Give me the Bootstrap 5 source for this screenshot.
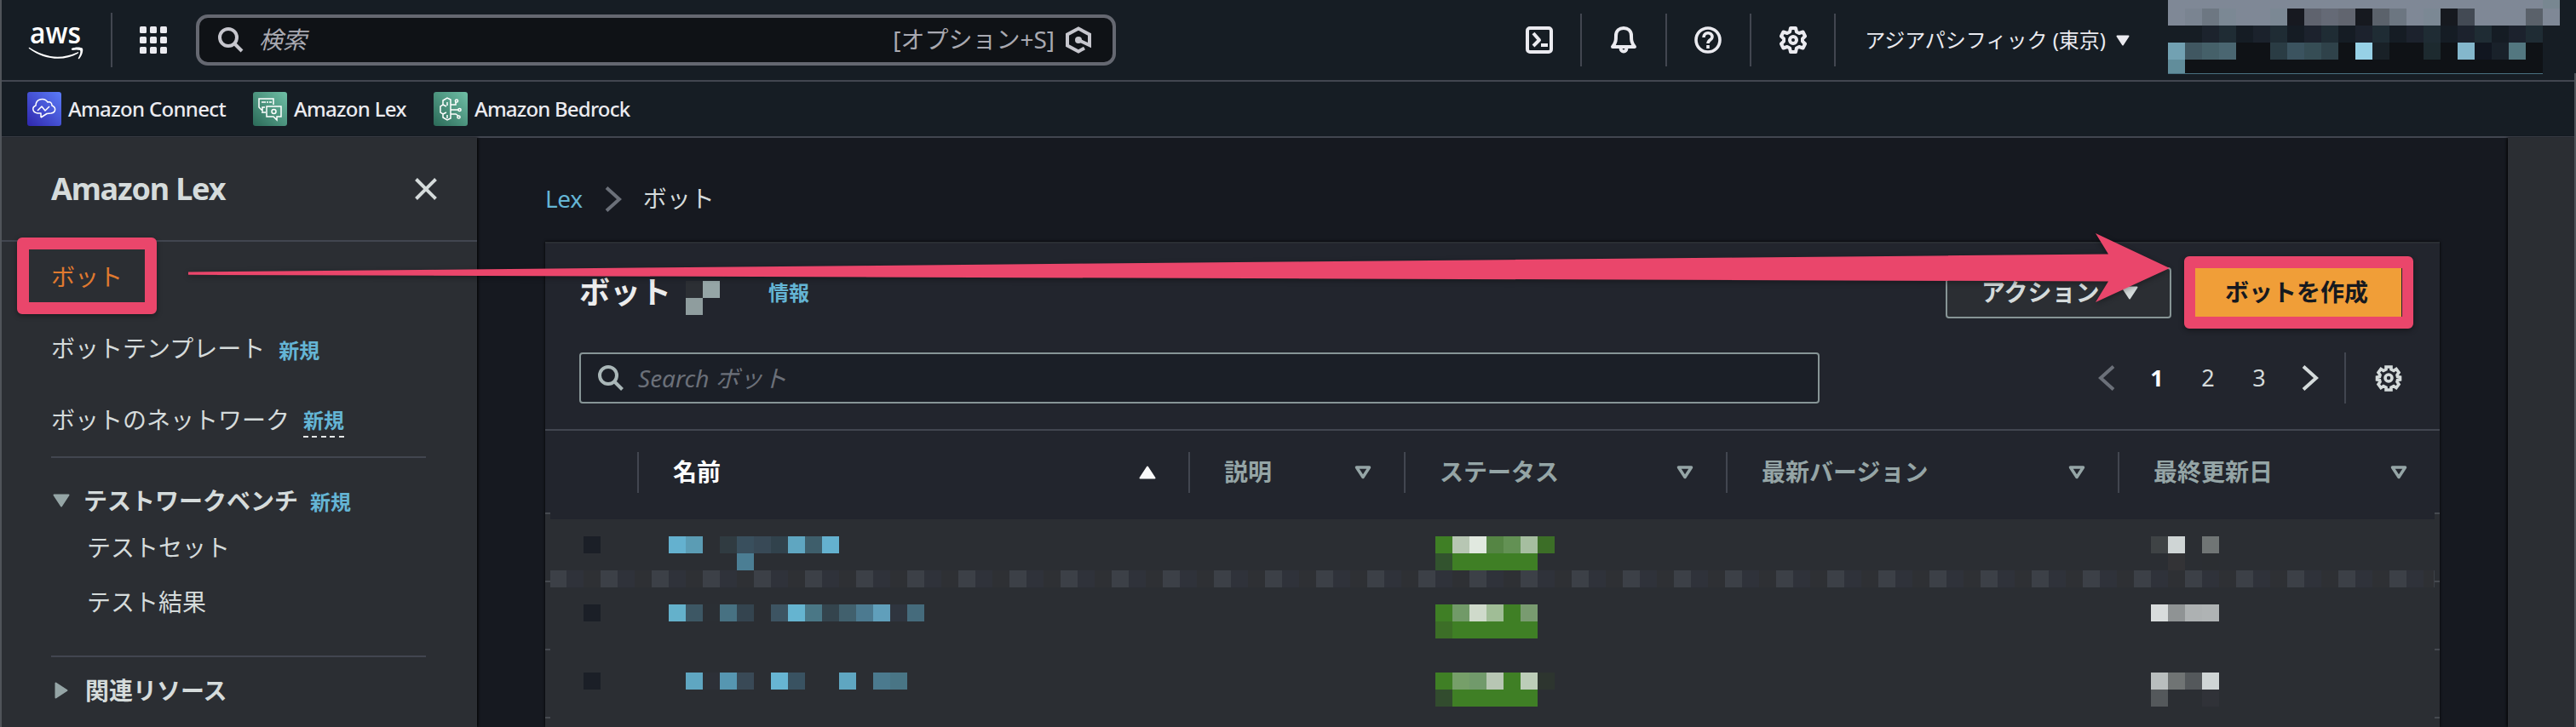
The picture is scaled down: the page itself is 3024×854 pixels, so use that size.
<!DOCTYPE html>
<html lang="ja" data-bs-theme="dark">
<head>
<meta charset="utf-8">
<title>Amazon Lex</title>
<meta name="viewport" content="width=device-width, initial-scale=1">
<link href="https://cdn.jsdelivr.net/npm/bootstrap@5.3.0/dist/css/bootstrap.min.css" rel="stylesheet">
<style>
  :root { --line:#424650; --panel:#2b2e33; --head:#22252d; --txt:#d5dbdb; --link:#64b5d5; --pink:#ea466b; --muted:#95a5a6; }
  body { width:3024px; height:854px; background:#161920; color:var(--txt); font-family:"Noto Sans","Noto Sans CJK JP",sans-serif; font-size:28px; line-height:40px; }
  svg { display:block; flex:none; }
  .edge { top:0; width:2px; height:854px; background:#50545a; z-index:5; }
  .edge-end { top:86px; height:768px; right:0; }
  .topnav { height:96px; background:#161d24; border-bottom:2px solid var(--line); padding-left:33px; color:#ebebf0; }
  .vline { width:2px; height:64px; background:var(--line); }
  .gsearch { width:1080px; height:60px; border:4px solid #656871; border-radius:14px; background:#0f1216; padding:0 25px 0 22px; color:#a9a9b1; }
  .tool { width:99.33px; height:62px; border-right:2px solid var(--line); }
  .region { font-size:24px; margin-left:34px; }
  .favbar { height:66px; background:#161d24; border-bottom:2px solid var(--line); padding-left:32px; gap:32px; font-size:24px; color:#ebebf0; font-weight:500; }
  .favitem { gap:8px; height:40px; }
  .side { width:560px; background:var(--panel); box-shadow:1px 0 3px #000; z-index:1; }
  .side-head { height:122px; border-bottom:2px solid var(--line); padding:0 47px 0 60px; font-size:36px; font-weight:700; }
  .side-link { height:84px; padding:0 0 3px 60px; }
  .sub-link { height:64px; padding-left:102px; }
  .fresh { font-size:24px; line-height:34px; font-weight:700; color:var(--link); position:relative; }
  .fresh-dash::after { content:""; position:absolute; left:0; right:0; bottom:-3px; height:2px; background:repeating-linear-gradient(90deg,#e6e8e8 0 6px,transparent 6px 10.4px); }
  .rule { height:2px; margin:0 60px; background:var(--line); }
  .callout { position:absolute; border:solid var(--pink); border-radius:6px; box-shadow:0 2px 6px rgba(0,0,0,.4); z-index:4; }
  .main-col { padding:0 80px; }
  .end-rail { width:80px; background:var(--panel); box-shadow:-1px 0 3px #000; }
  .crumbs { height:122px; padding-top:50px; gap:26px; }
  .panel { background:var(--head); border-top:2px solid #2a2e33; box-shadow:0 0 3px #000; height:570px; }
  .panel-title { font-size:36px; font-weight:700; color:#ececec; }
  .act { height:60px; border:2px solid #879596; border-radius:4px; background:var(--panel); width:265px; font-weight:700; padding:0 0 2px 40px; gap:27px; }
  .make { width:242px; height:57px; background:#f09e38; color:#16191f; font-weight:700; margin:1px 0 0 28px; padding:0 4px 2px 0; }
  .fsearch { width:1456px; height:60px; border:2px solid #879596; border-radius:4px; background:#1b1f27; color:#6b7079; padding-left:20px; }
  .list { table-layout:fixed; border-collapse:separate; border-spacing:0; border-top:2px solid var(--line); }
  .list > thead th { height:98px; padding:0 38px 0 0; border:0; background:var(--head); color:var(--muted); vertical-align:middle; }
  .hcell { height:48px; border-left:2px solid var(--line); padding-left:40px; }
  .hcell span { padding-bottom:3px; }
  .list > tbody td { height:80px; padding:26px 0 0; border:0; background:var(--panel); vertical-align:top; }
  .list > tbody tr:last-child td { height:10px; padding:0; }
  .px { display:grid; grid-auto-rows:20px; }
  .head-foot { left:6px; right:6px; top:318px; height:6px; background:var(--head); }
  .band { left:6px; right:6px; top:384px; height:20px; background:repeating-linear-gradient(90deg,#3c4047 0 20px,#2f323a 20px 40px,#2e3034 40px 60px) -1px 0; }
  .tick { width:6px; height:2px; background:#464a50; }
  .arrow { left:0; top:0; z-index:4; pointer-events:none; filter:drop-shadow(0 2px 3px rgba(0,0,0,.35)); }
</style>
</head>
<body class="overflow-hidden position-relative d-flex flex-column m-0">
<div class="edge position-absolute start-0"></div>
<div class="edge edge-end position-absolute"></div>

<header class="topnav d-flex align-items-center flex-shrink-0">
  <svg width="66" height="72" viewBox="0 -15 66 72" fill="#fff">
    <text x="2" y="25" font-family="Open Sans" font-weight="600" font-size="35" textLength="60" lengthAdjust="spacingAndGlyphs">aws</text>
    <path d="M1 31C19 45 43 46 58 37Q60 36 59 35Q41 43 26 40Q12 37 2 30Q0 29 1 31Z"/>
    <path d="M51 31C55 29 62 29 64 31C65 34 63 40 60 43Q58 44 59 42C61 38 62 35 61 33Q57 32 52 33Q50 32 51 31Z"/>
  </svg>
  <div class="vline" style="margin-left:31px"></div>
  <svg style="margin-left:32px" width="32" height="32" fill="#ebebf0">
    <g id="dots"><rect width="8" height="8" rx="1.5"/><rect x="12" width="8" height="8" rx="1.5"/><rect x="24" width="8" height="8" rx="1.5"/></g>
    <use href="#dots" y="12"/><use href="#dots" y="24"/>
  </svg>
  <div class="gsearch d-flex align-items-center" style="margin-left:34px">
    <svg width="30" height="30" viewBox="0 0 30 30" fill="none" stroke="#c6c6cd" stroke-width="4"><circle cx="12" cy="12" r="10"/><path d="M19 19l9 9"/></svg>
    <span class="fst-italic" style="margin:-2px 0 0 18px">検索</span>
    <span class="ms-auto" style="margin-top:-2px">[オプション+S]</span>
    <svg style="margin-left:13px" width="30" height="32" viewBox="0 0 30 32" fill="none" stroke="#c6c6cd" stroke-width="4"><path d="M22 25.500L15 29.500L2 22.500V9.500L15 2.500L28 9.500V22L15 16"/><circle cx="15" cy="16" r="4" fill="#c6c6cd" stroke="none"/></svg>
  </div>
  <div class="d-flex align-items-center" style="margin-left:448px">
    <div class="tool d-flex align-items-center justify-content-center"><svg width="32" height="32" viewBox="0 0 32 32" fill="none" stroke="#ebebf0" stroke-width="4" stroke-linejoin="round"><rect x="2" y="2" width="28" height="28" rx="3"/><path d="M9 8l7 8-7 7M18 22h8"/></svg></div>
    <div class="tool d-flex align-items-center justify-content-center"><svg width="32" height="32" viewBox="0 0 32 32" fill="none" stroke="#ebebf0" stroke-width="4" stroke-linejoin="round"><path d="M3 24C7 19 7 16 7 11C7 5 11 2 16 2S25 5 25 11C25 16 25 19 29 24Z"/><path d="M12.500 25c0 6 7 6 7 0"/></svg></div>
    <div class="tool d-flex align-items-center justify-content-center"><svg width="32" height="32" viewBox="0 0 32 32" fill="none" stroke="#ebebf0" stroke-width="3.600"><circle cx="16" cy="16" r="14"/><path d="M11 13C11 6 21 6 21 12.500C21 16 16 15.500 16 20"/><path d="M16 22v4"/></svg></div>
    <div class="tool d-flex align-items-center justify-content-center"><svg width="32" height="32" viewBox="0 0 32 32" fill="none" stroke="#ebebf0" stroke-width="4" stroke-linejoin="round"><path d="M13 2h6l1 4.500 3 1.500 4.500-1.500 2.500 5-3 3v3l3 3-2.500 5-4.500-1.500-3 1.500-1 4.500h-6l-1-4.500-3-1.500-4.500 1.500-2.500-5 3-3v-3l-3-3 2.500-5 4.500 1.500 3-1.500z"/><circle cx="16" cy="16" r="4"/></svg></div>
    <span class="region">アジアパシフィック (東京)</span>
    <svg style="margin-left:12px" width="16" height="13" fill="#ebebf0" stroke="#ebebf0" stroke-width="2" stroke-linejoin="round"><path d="M1.500 1.500h13L8 11.500z"/></svg>
  </div>
  <div class="ms-auto align-self-start" style="margin-right:19px">
    <div class="px" style="grid-auto-rows:10px" data-px="7f8896*22 788791"></div>
    <div class="px" data-px="7f8896 7a8491 6d7782 7b8894 7f8896*2 7b8894 171920 5f636e 656a76 61656f 16191f 5b626b 6c7681 7f8896 7b8894 16191f 434a54 7f8896*3 5a616a 7f8896/161d24*2 1c232d 1f2c34 151c24 1b222c 1f2c34 151c24 1c222d 1f2c34 151c24 1c222d 1f2c34 151c24 1c222d 1f2c34 151c24 1c222d 1f2c34 151c24 1c222d 1f2c34 -/72a1b2 405761 456069 4a6671 0f1216*2 2a3c44 3b535f 364d55 2f424a 0f1216 97d1e6 192127 0f1216*2 1d2a2f 0f1216 84b7cc 111620 19212a 537780 0f1216 -"></div>
    <div class="px" style="grid-auto-rows:16px" data-px="618d9b 0f1216*21 -"></div>
    <div style="width:440px;height:1px;background:#487080"></div>
  </div>
</header>

<nav class="favbar d-flex align-items-center flex-shrink-0">
  <div class="favitem d-flex align-items-center" style="width:233px">
    <svg width="40" height="40" viewBox="0 0 40 40"><defs><linearGradient id="gb" x1="0" y1="1" x2="1" y2="0"><stop stop-color="#2f27ad"/><stop offset="1" stop-color="#5b7cf8"/></linearGradient><linearGradient id="gg" x1="0" y1="1" x2="1" y2="0"><stop stop-color="#2b6a58"/><stop offset="1" stop-color="#6fbfa6"/></linearGradient></defs><rect width="40" height="40" rx="3" fill="url(#gb)"/><path d="M16 30v-5h-4C6 24 5 18 10 16C10 8 20 6 24 12C27 11 29 13 29 16C34 18 34 24 28 25L23 25.500L16 30M12 22l5-5 4 5 5-5" fill="none" stroke="#fff" stroke-width="1.500" stroke-linejoin="round"/></svg>
    <span class="text-nowrap" style="letter-spacing:-.67px">Amazon Connect</span>
  </div>
  <div class="favitem d-flex align-items-center" style="width:180px">
    <svg width="40" height="40" viewBox="0 0 40 40"><rect width="40" height="40" rx="3" fill="url(#gg)"/><path d="M14 18H11v4l-4-4V8h17v7M10 12h5m1 0h2m1 0h3M16 17h17v12h-5v4l-4-4h-8zM15 24H10" fill="none" stroke="#fff" stroke-width="1.500"/><circle cx="24.500" cy="23" r="2.500" fill="none" stroke="#fff" stroke-width="1.500"/></svg>
    <span class="text-nowrap" style="letter-spacing:-.7px">Amazon Lex</span>
  </div>
  <div class="favitem d-flex align-items-center">
    <svg width="40" height="40" viewBox="0 0 40 40"><rect width="40" height="40" rx="3" fill="url(#gg)"/><g fill="none" stroke="#fff" stroke-width="1.500"><path d="M20 9v22l-4 2-5-3v-4l-3-2v-7l3-2v-5l5-3zM11 15l4 2M11 26l4-2M16 12v4M16 31v-4M20 15h6v-3M20 21h9M20 26h6l3 2"/><circle cx="27" cy="10.500" r="1.600"/><circle cx="30.500" cy="21" r="1.600"/><circle cx="29.500" cy="29.500" r="1.600"/></g></svg>
    <span class="text-nowrap" style="letter-spacing:-.8px">Amazon Bedrock</span>
  </div>
</nav>

<div class="d-flex flex-grow-1">
  <aside class="side flex-shrink-0">
    <div class="side-head d-flex align-items-center justify-content-between">
      <span style="letter-spacing:-1.200px">Amazon Lex</span>
      <svg width="26" height="26" stroke="#d5dbdb" stroke-width="4"><path d="M1.500 1.500l23 23M24.500 1.500l-23 23"/></svg>
    </div>
    <div class="side-link d-flex align-items-center position-relative" style="color:#e07a2f">ボット<div class="callout" style="left:20px;top:-5px;width:164px;height:90px;border-width:14.500px 14px"></div></div>
    <div class="side-link d-flex align-items-center">ボットテンプレート<span class="fresh" style="margin:6px 0 0 16px">新規</span></div>
    <div class="side-link d-flex align-items-center">ボットのネットワーク<span class="fresh fresh-dash" style="margin:3px 0 0 16px">新規</span></div>
    <div class="rule"></div>
    <div class="d-flex align-items-center fw-bold" style="height:46px;margin-top:27px;padding-left:62px">
      <svg width="20" height="16" fill="#95a5a6" stroke="#95a5a6" stroke-width="2" stroke-linejoin="round"><path d="M1.500 1.500h17L10 14.500z"/></svg>
      <span style="margin-left:16px">テストワークベンチ</span><span class="fresh" style="margin:4px 0 0 14px">新規</span>
    </div>
    <div class="sub-link d-flex align-items-center">テストセット</div>
    <div class="sub-link d-flex align-items-center">テスト結果</div>
    <div class="rule" style="margin-top:31px"></div>
    <div class="d-flex align-items-center fw-bold" style="height:78px;padding-left:64px">
      <svg width="16" height="20" fill="#95a5a6" stroke="#95a5a6" stroke-width="2" stroke-linejoin="round"><path d="M1.500 1.500v17L14.500 10z"/></svg>
      <span style="margin-left:20px">関連リソース</span>
    </div>
  </aside>

  <main class="main-col flex-grow-1">
    <div class="crumbs d-flex align-items-start">
      <span style="color:var(--link);letter-spacing:-.3px;margin-top:1px">Lex</span>
      <svg style="margin-top:7px" width="20" height="30" fill="none" stroke="#6b7079" stroke-width="4"><path d="M2 1.500L17 15L2 28.500"/></svg>
      <span style="margin:1px 0 0 -1px">ボット</span>
    </div>
    <section class="panel position-relative">
      <div class="d-flex align-items-center" style="height:60px;margin:28px 45px 0 40px">
        <span class="panel-title">ボット</span>
        <div class="px" style="margin:12px 0 0 17px" data-px="2c2f34 95a5a6/8f9d9e -"></div>
        <span class="fw-bold" style="font-size:24px;color:var(--link);margin-left:57px">情報</span>
        <button class="act d-flex align-items-center ms-auto" style="color:var(--txt)">アクション<svg width="20" height="16" style="margin:2px 0 0 -2px" fill="#d5dbdb" stroke="#d5dbdb" stroke-width="2" stroke-linejoin="round"><path d="M1.500 1.500h17L10 14.500z"/></svg></button>
        <div class="make d-flex align-items-center align-self-start justify-content-center position-relative">ボットを作成<div class="callout" style="left:-13px;top:-14px;width:269px;height:85px;border-width:14px 13.500px"></div></div>
      </div>
      <div class="d-flex align-items-center" style="height:60px;margin:40px 44px 0 40px">
        <div class="fsearch d-flex align-items-center fst-italic">
          <svg width="30" height="30" viewBox="0 0 30 30" fill="none" stroke="#aab7b8" stroke-width="4"><circle cx="12" cy="12" r="10"/><path d="M19 19l9.500 9.500"/></svg>
          <span style="margin-left:17px">Search ボット</span>
        </div>
        <div class="ms-auto d-flex align-items-center" style="font-size:27px">
          <svg width="20" height="30" fill="none" stroke="#6b7079" stroke-width="4"><path d="M18 1.500L3 15L18 28.500"/></svg>
          <span class="text-center fw-bold text-white" style="width:60px;margin-left:19px">1</span>
          <span class="text-center" style="width:60px">2</span>
          <span class="text-center" style="width:60px">3</span>
          <svg style="margin-left:20px" width="20" height="30" fill="none" stroke="#d5dbdb" stroke-width="4"><path d="M2 1.500L17 15L2 28.500"/></svg>
          <div class="vline" style="height:60px;margin:0 34px 0 30px"></div>
          <svg width="32" height="32" viewBox="0 0 32 32" fill="none" stroke="#d5dbdb" stroke-width="3.600"><path d="M13 3h6v3l3 1.500 3-2 3 4-2 3 .500 2 3 .500v3l-3 .500-.500 2 2 3-3 4-3-2-3 1.500v3h-6v-3l-3-1.500-3 2-3-4 2-3-.500-2-3-.500v-3l3-.500.500-2-2-3 3-4 3 2 3-1.500z"/><circle cx="16" cy="16" r="4"/></svg>
        </div>
      </div>
      <table class="list table mb-0" style="margin-top:30px">
        <colgroup><col style="width:108px"><col style="width:647px"><col style="width:253px"><col style="width:378px"><col style="width:460px"><col style="width:378px"></colgroup>
        <thead><tr id="heads"><th></th></tr></thead>
        <tbody>
          <tr><td><div class="px" style="margin-left:45px" data-px="1b1f27"></div></td>
            <td><div class="px" style="margin-left:37px" data-px="64b1cf 5b9cb4 - 303b41 394f5d 384956 31424c 5fa6c1 3e5e6b 64b1cf/-*4 4b7e94"></div></td><td></td>
            <td><div class="px" style="margin-left:37px" data-px="3f7f25 b7c6b3 e1e9e0 558544 639154 a6bea0 3c6e27/32532e 3f7f25*5 -"></div></td><td></td>
            <td><div class="px" style="margin-left:39px" data-px="3f4345 cfd5d5 - 707575/- 333336 - 2b2e32"></div></td></tr>
          <tr><td><div class="px" style="margin-left:45px" data-px="1b1f27"></div></td>
            <td><div class="px" style="margin-left:37px" data-px="64b1cb 3d5764 2b2f34 477182 34444f - 3d5462 65b4d0 4a7786 34444d 41606d 4c7a90 609fbb 2f353f 456b7c"></div></td><td></td>
            <td><div class="px" style="margin-left:37px" data-px="3f7f25 719a68 cfdacb a0bd96 3f7f25 799b70/3c6e27 3f7f25*5"></div></td><td></td>
            <td><div class="px" style="margin-left:39px" data-px="d8dcdc 8f9394 adb1b2 afb3b4"></div></td></tr>
          <tr><td><div class="px" style="margin-left:45px" data-px="1b1f27"></div></td>
            <td><div class="px" style="margin-left:37px" data-px="- 5fa6c1 2d3037 5696b1 394956 - 67b5d3 395261 -*2 5fa6c1 - 4b7a8e 497585"></div></td><td></td>
            <td><div class="px" style="margin-left:37px" data-px="3f7f25 769f69 719a6b b7c6b3 3f7f25 bccdb8 2d352f/324c2e 3f7f25*5 -"></div></td><td></td>
            <td><div class="px" style="margin-left:39px" data-px="b9bebe 707474 54585b cfd5d5/54585b -*2 303238"></div></td></tr>
          <tr><td></td><td></td><td></td><td></td><td></td><td></td></tr>
        </tbody>
      </table>
      <div class="head-foot position-absolute"></div>
      <div class="band position-absolute"></div>
      <div id="ticks"></div>
    </section>
  </main>
  <div class="end-rail flex-shrink-0"></div>
</div>

<svg class="arrow position-absolute" width="3024" height="854" fill="#ea466b"><path d="M221 319.500L2475 298.500L2460 274L2547 315L2460 355L2475 330.500L221 322.800Z"/></svg>

<script>
  // Expand "colour*count" runs into grid cells; "-" is an empty cell and "/" starts a new row.
  document.querySelectorAll('.px').forEach(function (el) {
    var rows = el.dataset.px.split('/').map(function (r) {
      return r.trim().split(/\s+/).flatMap(function (t) {
        var p = t.split('*');
        return Array(+(p[1] || 1)).fill(p[0]);
      });
    });
    el.style.gridTemplateColumns = 'repeat(' + rows[0].length + ',20px)';
    rows.forEach(function (r) {
      r.forEach(function (c) {
        var d = document.createElement('i');
        if (c !== '-') d.style.background = '#' + c;
        el.appendChild(d);
      });
    });
  });
  // Column headings with their sort markers.
  ['名前', '説明', 'ステータス', '最新バージョン', '最終更新日'].forEach(function (name, i) {
    var mark = i === 0
      ? '<svg width="20" height="16" fill="#fafafa" stroke="#fafafa" stroke-width="2" stroke-linejoin="round"><path d="M1.500 14.500h17L10 1.500z"/></svg>'
      : '<svg width="20" height="16" fill="none" stroke="#95a5a6" stroke-width="3.500" stroke-linejoin="round"><path d="M2.500 2h15L10 13.500z"/></svg>';
    document.getElementById('heads').insertAdjacentHTML('beforeend',
      '<th><div class="hcell d-flex align-items-center justify-content-between' + (i ? '' : ' text-white') + '"><span>' + name + '</span>' + mark + '</div></th>');
  });
  // Row separators that show at both ends of the table.
  [316, 396, 476, 556].forEach(function (y) {
    ['start-0', 'end-0'].forEach(function (side) {
      document.getElementById('ticks').insertAdjacentHTML('beforeend', '<div class="tick position-absolute ' + side + '" style="top:' + y + 'px"></div>');
    });
  });
</script>
<script src="https://cdn.jsdelivr.net/npm/bootstrap@5.3.0/dist/js/bootstrap.bundle.min.js"></script>
</body>
</html>
